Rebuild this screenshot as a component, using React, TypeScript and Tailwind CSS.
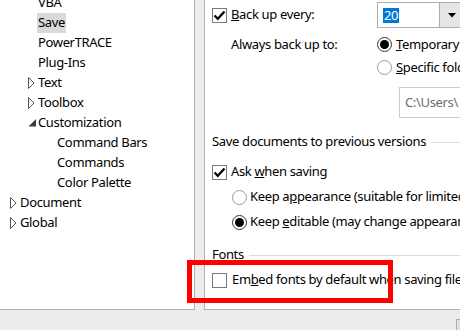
type Node = { label: string; level: 1 | 2 | 3; toggle?: "closed" | "open"; selected?: boolean };

const tree: Node[] = [
  { label: "VBA", level: 2 },
  { label: "Save", level: 2, selected: true },
  { label: "PowerTRACE", level: 2 },
  { label: "Plug-Ins", level: 2 },
  { label: "Text", level: 2, toggle: "closed" },
  { label: "Toolbox", level: 2, toggle: "closed" },
  { label: "Customization", level: 2, toggle: "open" },
  { label: "Command Bars", level: 3 },
  { label: "Commands", level: 3 },
  { label: "Color Palette", level: 3 },
  { label: "Document", level: 1, toggle: "closed" },
  { label: "Global", level: 1, toggle: "closed" },
];

const indent = { 1: "pl-[10px]", 2: "pl-[28px]", 3: "pl-[47px]" };

function Toggle({ kind }: { kind?: "closed" | "open" }) {
  if (kind === "closed")
    return (
      <svg width="9" height="12" viewBox="0 0 9 12" className="shrink-0">
        <path d="M0.5 0.5 L6 6 L0.5 11.5 Z" fill="white" stroke="#555" strokeWidth="1" />
      </svg>
    );
  if (kind === "open")
    return (
      <svg width="9" height="10" viewBox="0 0 9 10" className="shrink-0">
        <path d="M8 1 L8 8.5 L0.5 8.5 Z" fill="#3c3c3c" />
      </svg>
    );
  return <span className="w-[9px] shrink-0" />;
}

function Checkbox({ checked }: { checked?: boolean }) {
  return (
    <span className="w-[15px] h-[15px] border border-[#7a7a7a] bg-white shrink-0 flex items-center justify-center">
      {checked && (
        <svg width="13" height="13" viewBox="0 0 13 13">
          <path d="M1.5 6.5 L4.8 9.8 L11.5 2.5" fill="none" stroke="#000" strokeWidth="2.2" />
        </svg>
      )}
    </span>
  );
}

function Radio({ checked }: { checked?: boolean }) {
  return (
    <svg width="15" height="15" viewBox="0 0 15 15" className="shrink-0">
      <circle cx="7.5" cy="7.5" r="7" fill="white" stroke={checked ? "#333" : "#9a9a9a"} />
      {checked && <circle cx="7.5" cy="7.5" r="4.5" fill="#000" />}
    </svg>
  );
}

function GroupHeader({ title }: { title: string }) {
  return (
    <div className="flex items-center h-[20px] gap-[5px]">
      <span className="whitespace-nowrap">{title}</span>
      <span className="flex-1 h-px bg-[#dcdcdc]" />
    </div>
  );
}

export default function App() {
  return (
    <div className="w-[460px] h-[330px] overflow-hidden bg-[#ececec] font-['Noto_Sans',sans-serif] text-[13px] tracking-[-0.35px] text-black">
      <div className="flex h-[310px]">
        {/* Tree */}
        <div className="w-[195px] shrink-0 bg-white border-r border-b border-[#b0b0b0] overflow-hidden">
          <div className="-mt-[7px]">
            {tree.map((n) => (
              <div key={n.label} className={`flex items-center h-[20px] ${indent[n.level]}`}>
                <Toggle kind={n.toggle} />
                <span
                  className={`h-full flex items-center px-px whitespace-nowrap ${n.selected ? "bg-[#d9d9d9]" : ""}`}
                >
                  {n.label}
                </span>
              </div>
            ))}
          </div>
        </div>

        <div className="w-[9px] shrink-0" />

        {/* Settings */}
        <div className="flex-1 min-w-0 bg-white border-l border-b border-[#b0b0b0] overflow-hidden pl-[7px]">
          <div className="w-[320px]">
            <div className="flex items-center h-[26px] mt-[2px]">
              <div className="w-[165px] flex items-center gap-[4px]">
                <Checkbox checked />
                <span>
                  <u>B</u>ack up every:
                </span>
              </div>
              <div className="w-[120px] h-[26px] border border-[#adadad] flex">
                <div className="w-[61px] flex items-center pl-[5px]">
                  <span className="bg-[#0078d7] text-white leading-[15px] px-px">20</span>
                </div>
                <div className="flex-1 bg-[#e5e5e5] border-l border-[#adadad] flex items-start pt-[10px] pl-[8px]">
                  <svg width="8" height="5" viewBox="0 0 8 5">
                    <path d="M0 0 H8 L4 4.5 Z" fill="#000" />
                  </svg>
                </div>
              </div>
            </div>

            <div className="flex items-center h-[23px] mt-[5px]">
              <span className="w-[165px] pl-[19px]">Always back up to:</span>
              <div className="flex items-center gap-[4px]">
                <Radio checked />
                <span className="whitespace-nowrap">
                  <u>T</u>emporary folder
                </span>
              </div>
            </div>
            <div className="flex items-center h-[23px] pl-[165px] gap-[4px]">
              <Radio />
              <span className="whitespace-nowrap">
                <u>S</u>pecific folder:
              </span>
            </div>

            <div className="ml-[187px] mt-[8px] h-[31px] border border-[#cccccc] flex items-center pl-[5px] text-[#6d6d6d]">
              C:\Users\
            </div>

            <div className="mt-[14px]">
              <GroupHeader title="Save documents to previous versions" />
            </div>
            <div className="flex items-center h-[20px] mt-[10px] gap-[4px]">
              <Checkbox checked />
              <span className="whitespace-nowrap">
                Ask <u>w</u>hen saving
              </span>
            </div>
            <div className="flex items-center h-[20px] mt-[5px] pl-[20px] gap-[3px]">
              <Radio />
              <span className="whitespace-nowrap">
                Keep a<u>p</u>pearance (suitable for limited editing)
              </span>
            </div>
            <div className="flex items-center h-[20px] mt-[5px] pl-[20px] gap-[3px]">
              <Radio checked />
              <span className="whitespace-nowrap">
                Keep <u>e</u>ditable (may change appearance)
              </span>
            </div>

            <div className="mt-[13px]">
              <GroupHeader title="Fonts" />
            </div>
            <div className="flex items-center h-[20px] mt-[5px] gap-[5px]">
              <Checkbox />
              <span className="whitespace-nowrap">
                Em<u>b</u>ed fonts by default when saving files
              </span>
            </div>
          </div>
        </div>
      </div>

      <div className="flex justify-end pt-[9px]">
        <div className="w-[4px] h-[20px] border-l border-t border-[#adadad] bg-[#e1e1e1]" />
      </div>

      {/* annotation */}
      <div className="absolute left-[187px] top-[260px] w-[206px] h-[43px] border-[5px] border-[#ff0000]" />
    </div>
  );
}
